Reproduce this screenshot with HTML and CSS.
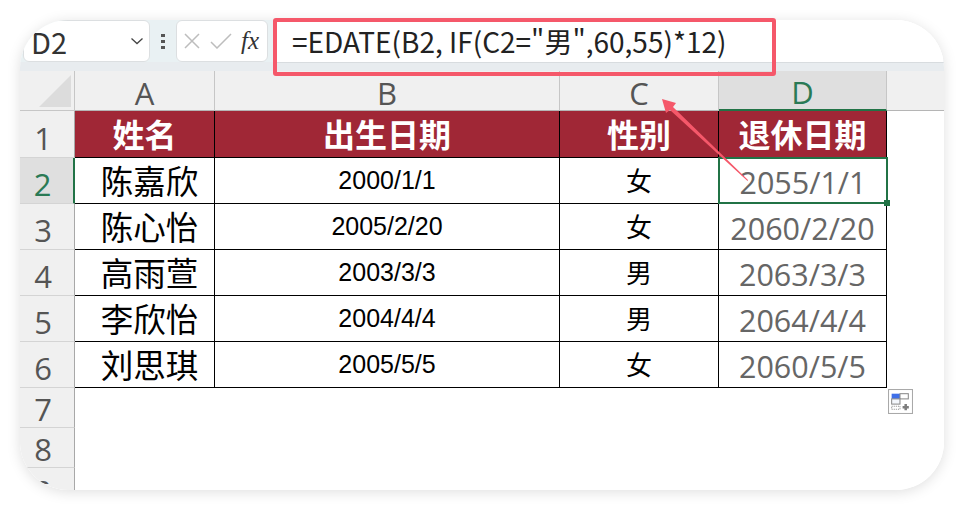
FILE: index.html
```html
<!DOCTYPE html>
<html lang="zh">
<head>
<meta charset="utf-8">
<title>EDATE</title>
<link rel="stylesheet" href="styles.css">
</head>
<body>
<div class="card">
  <div class="toolbar">
    <div class="namebox"><span class="nametext">D2</span>
      <svg class="chev" width="14" height="8" viewBox="0 0 14 8"><path d="M1.5 1.5 7 6.5l5.5-5" fill="none" stroke="#444" stroke-width="1.3"/></svg>
    </div>
    <div class="dots"><i></i><i></i><i></i></div>
    <div class="fnbox">
      <svg width="18" height="18" viewBox="0 0 18 18"><path d="M2 2l14 14M16 2 2 16" fill="none" stroke="#bdbdbd" stroke-width="1.5"/></svg>
      <svg width="22" height="16" viewBox="0 0 22 16"><path d="M1 9l6 6L21 1" fill="none" stroke="#bdbdbd" stroke-width="1.5"/></svg>
      <span class="fx">fx</span>
    </div>
    <div class="formula">=EDATE(B2, IF(C2="男",60,55)*12)</div>
  </div>
  <div class="sheet">
    <div class="corner"><svg width="32" height="32" viewBox="0 0 32 32"><path d="M32 0V32H0Z" fill="#dcdcdc"/></svg></div>
    <div class="colhead">A</div><div class="colhead">B</div><div class="colhead">C</div><div class="colhead active">D</div><div class="colrest"></div>

    <div class="rowhead first">1</div>
    <div class="th">姓名</div><div class="th">出生日期</div><div class="th">性别</div><div class="th">退休日期</div><div class="rest"></div>

    <div class="rowhead active">2</div>
    <div class="td name">陈嘉欣</div><div class="td date">2000/1/1</div><div class="td sex">女</div><div class="td ret selected">2055/1/1<i class="handle"></i></div><div class="rest"></div>

    <div class="rowhead">3</div>
    <div class="td name">陈心怡</div><div class="td date">2005/2/20</div><div class="td sex">女</div><div class="td ret">2060/2/20</div><div class="rest"></div>

    <div class="rowhead">4</div>
    <div class="td name">高雨萱</div><div class="td date">2003/3/3</div><div class="td sex">男</div><div class="td ret">2063/3/3</div><div class="rest"></div>

    <div class="rowhead">5</div>
    <div class="td name">李欣怡</div><div class="td date">2004/4/4</div><div class="td sex">男</div><div class="td ret">2064/4/4</div><div class="rest"></div>

    <div class="rowhead">6</div>
    <div class="td name">刘思琪</div><div class="td date">2005/5/5</div><div class="td sex">女</div><div class="td ret">2060/5/5</div><div class="rest"></div>

    <div class="rowhead tall">7</div><div class="blank"></div>
    <div class="rowhead tall">8</div><div class="blank"></div>
    <div class="rowhead tall last"><span class="clip">9</span></div><div class="blank"></div>
  </div>
  <div class="paste">
    <svg width="25" height="25" viewBox="0 0 24 24">
      <rect x="0.5" y="0.5" width="23" height="23" fill="#fff" stroke="#a9a9a9"/>
      <rect x="3.5" y="4.500" width="8" height="5" fill="#3f6fe8"/>
      <rect x="11.500" y="4.500" width="8" height="5" fill="#fff" stroke="#8a8a8a"/>
      <rect x="3.500" y="9.500" width="8" height="5" fill="#f4f7fc" stroke="#8a8a8a"/>
      <rect x="3.500" y="16.500" width="8" height="3" fill="none" stroke="#8a8a8a" stroke-dasharray="1 1"/>
      <path d="M14 17.500h6M17 14.500v6" stroke="#7d7d7d" stroke-width="2.4"/>
    </svg>
  </div>
</div>
<div class="redbox"></div>
<svg class="arrow" width="110" height="100" viewBox="0 0 110 100">
  <path d="M2 2 16 6 13 10 88 83 87.500 84 10 13 6 16Z" fill="#f5586a"/>
</svg>
</body>
</html>
```
FILE: styles.css
```css
* { box-sizing: border-box; }
html, body { margin: 0; height: 100%; background: #fff; }
body {
  width: 962px;
  height: 508px;
  padding: 20px 18px 18px 20px;
  position: relative;
  overflow: hidden;
  font-family: "Noto Sans CJK SC", "Noto Sans", sans-serif;
}
.card {
  position: relative;
  width: 924px;
  height: 470px;
  border-radius: 48px;
  overflow: hidden;
  background: #fff;
  box-shadow: 0 2px 14px rgba(0, 0, 0, .13);
}
.toolbar {
  height: 51px;
  display: flex;
  align-items: flex-start;
  background: linear-gradient(to right, #e9f1f3 0, #e9f1f3 260px, #fff 261px);
  border-bottom: 9px solid #e8ecef;
}
.namebox {
  width: 127px;
  height: 42px;
  margin-left: 3px;
  background: #fff;
  border: 1px solid #dcdfe1;
  border-radius: 6px;
  display: flex;
  align-items: center;
  justify-content: space-between;
  padding: 0 5px 0 7px;
}
.nametext { font-size: 29px; color: #333; line-height: 1; }
.dots { width: 26px; height: 42px; display: flex; flex-direction: column; align-items: center; justify-content: center; gap: 3px; }
.dots i { width: 4px; height: 3px; background: #555; display: block; }
.fnbox {
  width: 92px;
  height: 42px;
  background: #fff;
  border: 1px solid #dcdfe1;
  border-radius: 6px;
  display: flex;
  align-items: center;
  padding-left: 6px;
  gap: 9px;
}
.fx { font: italic 25px "Liberation Serif", serif; color: #333; }
.formula {
  flex: 1;
  height: 42px;
  margin-left: 8px;
  padding-left: 16px;
  background: #fff;
  font-size: 28px;
  line-height: 42px;
  color: #222;
  white-space: nowrap;
  box-shadow: 0 1px 0 #d8dcdf;
}
.sheet {
  display: grid;
  grid-template-columns: 55px 140px 345px 159px 168px 57px;
  grid-template-rows: 40px 47px 46px 46px 46px 46px 46px 40px 40px 23px;
  background: #fff;
}
.corner {
  background: #f0f0f0;
  border-right: 1px solid #c6c6c6;
  border-bottom: 1px solid #c6c6c6;
  display: flex;
  justify-content: flex-end;
  align-items: flex-end;
  padding: 0 3px 3px 0;
}
.colhead {
  background: #f0f0f0;
  border-right: 1px solid #c6c6c6;
  border-bottom: 1px solid #b5b5b5;
  display: flex;
  justify-content: center;
  align-items: center;
  padding-top: 4px;
  font: 31px "Open Sans", sans-serif;
  color: #555;
}
.colhead.active { background: #dfdfdf; color: #2a7a55; border-bottom: 2px solid #217346; }
.colrest { border-bottom: 1px solid #b5b5b5; background: #f0f0f0; }
.rowhead {
  background: #f0f0f0;
  border-right: 1px solid #a8a8a8;
  border-bottom: 1px solid #d4d4d4;
  display: flex;
  justify-content: center;
  align-items: center;
  padding: 7px 8px 0 0;
  font: 31px "Open Sans", sans-serif;
  color: #555;
}
.rowhead.first { padding-top: 8px; }
.rowhead.active { background: #dfdfdf; color: #2a7a55; border-right: 2px solid #217346; }
.rowhead.tall { padding-top: 3px; }
.rowhead.last { border-bottom: 0; align-items: flex-start; padding-top: 0; }
.clip { display: block; height: 16px; line-height: 46px; overflow: hidden; }
.th, .td {
  display: flex;
  align-items: center;
  justify-content: center;
  border-right: 1px solid #000;
  border-bottom: 1px solid #000;
  white-space: nowrap;
}
.th {
  background: #a02736;
  color: #fff;
  font-size: 32px;
  font-weight: 700;
  padding-bottom: 3px;
}
.td { background: #fff; color: #111; }
.name { font-size: 32.5px; color: #000; padding: 0 0 3px 10px; }
.date { font: 25px "Liberation Sans", sans-serif; color: #000; padding-bottom: 1px; }
.sex { font-size: 26px; color: #000; padding-bottom: 3px; }
.ret { font: 30.5px "Open Sans", sans-serif; color: #666; padding-top: 2px; }
.selected { position: relative; border: 2px solid #217346; margin: -1px -1px 0 -1px; }
.handle { position: absolute; right: -4px; bottom: -4px; width: 6px; height: 6px; background: #217346; }
.blank { grid-column: 2 / -1; }
.paste { position: absolute; left: 868px; top: 369px; width: 25px; height: 25px; }
.paste svg { display: block; }
.redbox {
  position: absolute;
  left: 273px;
  top: 18px;
  width: 503px;
  height: 58px;
  border: 4px solid #f5586a;
  border-radius: 3px;
}
.arrow { position: absolute; left: 660px; top: 97px; }
```
